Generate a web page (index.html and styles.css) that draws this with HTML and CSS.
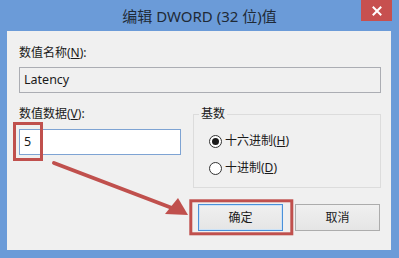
FILE: index.html
```html
<!DOCTYPE html>
<html lang="zh-CN">
<head>
<meta charset="utf-8">
<title>编辑 DWORD (32 位)值</title>
<link rel="stylesheet" href="styles.css">
</head>
<body>
<div class="window">
  <div class="titlebar">
    <span class="spacer"></span>
    <span class="title">编辑 DWORD (32 位)值</span>
    <span class="close-cell">
      <span class="close">
        <svg width="10" height="10" viewBox="0 0 10 10"><path d="M1.5 1.5 L8.5 8.5 M8.5 1.5 L1.5 8.5" stroke="#fff" stroke-width="2" stroke-linecap="square"/></svg>
      </span>
    </span>
  </div>
  <div class="client">
    <div class="label">数值名称(<u>N</u>):</div>
    <div class="field readonly">Latency</div>
    <div class="row">
      <div class="col">
        <div class="label">数值数据(<u>V</u>):</div>
        <div class="field edit">5</div>
      </div>
      <fieldset class="base">
        <legend>基数</legend>
        <div class="radio first"><span class="dot checked"></span><span>十六进制(<u>H</u>)</span></div>
        <div class="radio"><span class="dot"></span><span>十进制(<u>D</u>)</span></div>
      </fieldset>
    </div>
    <div class="buttons">
      <button class="btn default">确定</button>
      <button class="btn">取消</button>
    </div>
  </div>
  <svg class="annot" width="399" height="258" viewBox="0 0 399 258">
    <rect x="14.5" y="123.5" width="27" height="36" fill="none" stroke="#c0504d" stroke-width="3"/>
    <rect x="190.8" y="200.8" width="101" height="33" fill="none" stroke="#c0504d" stroke-width="3"/>
    <line x1="54" y1="163" x2="172" y2="208" stroke="#c0504d" stroke-width="4" stroke-linecap="round"/>
    <polygon points="188,215 165,214 178,198" fill="#c0504d"/>
  </svg>
</div>
</body>
</html>
```

FILE: styles.css
```css
html, body {
  margin: 0;
  padding: 0;
}
body {
  width: 399px;
  height: 258px;
  overflow: hidden;
  font-family: "Noto Sans", "Noto Sans CJK SC", sans-serif;
  font-size: 12px;
  color: #1a1a1a;
}
.window {
  position: relative;
  width: 399px;
  height: 258px;
  background: #6b9bd8;
  display: flex;
  flex-direction: column;
}
.titlebar {
  height: 31px;
  display: grid;
  grid-template-columns: 1fr auto 1fr;
  align-items: center;
}
.title {
  font-size: 15px;
  line-height: 20px;
  color: #1f2a36;
  white-space: nowrap;
  padding-top: 1px;
}
.close-cell {
  align-self: start;
  justify-self: end;
  margin-right: 7px;
}
.close {
  width: 31px;
  height: 21px;
  background: #c7504f;
  display: flex;
  align-items: center;
  justify-content: center;
}
.close svg {
  display: block;
  margin-left: 1px;
}
.client {
  flex: 1;
  margin: 0 8px 8px 7px;
  background: #f0f0f0;
  padding: 14px 10px 0 12px;
  box-sizing: border-box;
}
.label {
  line-height: 16px;
  height: 16px;
  white-space: nowrap;
}
.field {
  box-sizing: border-box;
  height: 26px;
  margin-top: 6px;
  padding: 0 4px;
  line-height: 24px;
  font-size: 12.5px;
}
.readonly {
  border: 1px solid #abadb3;
  background: #f0f0f0;
}
.edit {
  border: 1px solid #7ea3d3;
  background: #fff;
  margin-top: 7px;
}
.row {
  display: flex;
  gap: 12px;
  margin-top: 13px;
}
.col {
  width: 162px;
}
.base {
  margin: 0;
  width: 188px;
  box-sizing: border-box;
  border: 1px solid #dcdcdc;
  padding: 11px 0 11px 5px;
}
.base legend {
  padding: 0 2px;
  line-height: 16px;
}
.radio {
  display: flex;
  align-items: center;
  gap: 3px;
  line-height: 16px;
  margin-left: 10px;
  margin-top: 11px;
}
.radio.first {
  margin-top: 0;
}
.dot {
  width: 11px;
  height: 11px;
  border: 1px solid #333;
  border-radius: 50%;
  background: #fff;
  display: flex;
  align-items: center;
  justify-content: center;
}
.dot.checked::after {
  content: "";
  width: 7px;
  height: 7px;
  border-radius: 50%;
  background: #1a1a1a;
}
.buttons {
  display: flex;
  justify-content: flex-end;
  gap: 12px;
  margin-top: 16px;
  padding-right: 1px;
}
.btn {
  width: 85px;
  height: 27px;
  box-sizing: border-box;
  border: 1px solid #acacac;
  background: linear-gradient(#f0f0f0, #e5e5e5);
  font-family: inherit;
  font-size: 12px;
  color: #1a1a1a;
  padding: 0;
  line-height: 25px;
}
.btn.default {
  border-color: #4a90d9;
  box-shadow: inset 0 0 0 1px #cde3f7;
}
.annot {
  position: absolute;
  left: 0;
  top: 0;
  pointer-events: none;
}
```
